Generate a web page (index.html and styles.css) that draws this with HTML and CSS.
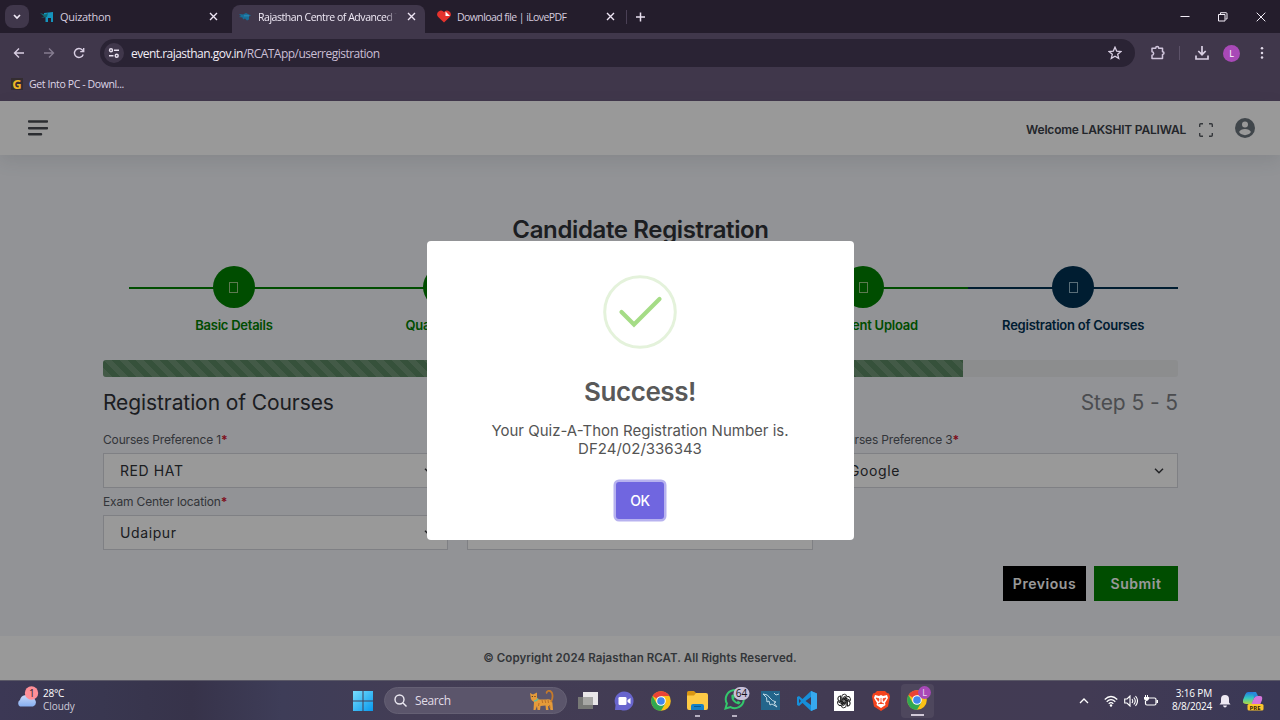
FILE: index.html
```html
<!DOCTYPE html>
<html lang="en">
<head>
<meta charset="utf-8">
<title>Rajasthan Centre of Advanced Technology</title>
<link rel="stylesheet" href="styles.css">
</head>
<body>
<div class="screen">
  <header class="browser">
    <div class="tabstrip">
      <span class="tab-search"><svg width="24" height="23" viewBox="0 0 24 23"><path d="M9 10l3 3 3-3" fill="none" stroke="#f0eaf6" stroke-width="1.7"/></svg></span>
      <div class="tab first">
        <svg class="fav" width="14" height="14" viewBox="0 0 14 14"><path d="M4 3L13 2v10h-2V8H8v4H5.500V7L4 6z" fill="#1594bd"/><path d="M0 3l5 1.500L8 3 7 7 1 8l3-1.500z" fill="#126b74"/></svg>
        <span class="tab-title">Quizathon</span>
        <svg class="x" width="9" height="9" viewBox="0 0 9 9"><path d="M1 1l7 7M8 1L1 8"/></svg>
      </div>
      <div class="tab active">
        <svg class="fav" width="14" height="14" viewBox="0 0 14 14"><path d="M1 4l4 .5L8 3l5 2.500-2 1v3l-2 1-2-2-2 1-.5-2L1 7l2-1z" fill="#166e98"/><path d="M6 5h5v1.500H6z" fill="#2a81ad"/></svg>
        <span class="tab-title fade">Rajasthan Centre of Advanced T</span>
        <svg class="x" width="9" height="9" viewBox="0 0 9 9"><path d="M1 1l7 7M8 1L1 8"/></svg>
      </div>
      <div class="tab third">
        <svg class="fav" width="14" height="14" viewBox="0 0 14 14"><path d="M7 12.500L1.200 7A3.800 3.800 0 0 1 7 2a3.800 3.800 0 0 1 5.800 5z" fill="#e5322d"/><path d="M8.500 1.500L13 6H8.500z" fill="#fff"/></svg>
        <span class="tab-title">Download file | iLovePDF</span>
        <svg class="x" width="9" height="9" viewBox="0 0 9 9"><path d="M1 1l7 7M8 1L1 8"/></svg>
      </div>
      <svg class="plus" width="9" height="10" viewBox="0 0 9 10"><path d="M4.500 .5v9M0 5h9" stroke="#e8e0ef" stroke-width="1.500"/></svg>
      <div class="window-controls">
        <svg width="10" height="10" viewBox="0 0 10 10"><path d="M.5 4.500h9"/></svg>
        <svg width="10" height="10" viewBox="0 0 10 10"><path d="M.5 2.500h6.500v6.500H.5zM2.500 2.500V.7h5.500q1 0 1 1v5.300H7.500"/></svg>
        <svg width="10" height="10" viewBox="0 0 10 10"><path d="M.7 .7l8.600 8.600M9.300 .7L.7 9.300"/></svg>
      </div>
    </div>
    <div class="toolbar">
      <div class="nav">
        <svg width="12" height="12" viewBox="0 0 12 12"><path d="M11 6H1.500M6 1.500L1.500 6 6 10.500"/></svg>
        <svg class="dim" width="12" height="12" viewBox="0 0 12 12"><path d="M1 6h9.500M6 1.500L10.500 6 6 10.500"/></svg>
        <svg width="12" height="12" viewBox="0 0 12 12"><path d="M10.200 7.500A4.500 4.500 0 1 1 9.300 3L10.500 4.300M10.700 1v3.600H7.200"/></svg>
      </div>
      <div class="omnibox">
        <span class="site"><svg width="12" height="12" viewBox="0 0 12 12"><g fill="none" stroke="#e8e0ef" stroke-width="1.400"><circle cx="3" cy="3.200" r="1.500"/><path d="M6 3.200h5M1 8.800h4.500"/><circle cx="8.700" cy="8.800" r="1.500"/></g></svg></span>
        <span class="url">event.rajasthan.gov.in<span>/RCATApp/userregistration</span></span>
        <svg class="star" width="14" height="14" viewBox="0 0 14 14"><path d="M7 1.200l1.700 3.900 4.200.4-3.200 2.800 1 4.100L7 10.200l-3.700 2.200 1-4.100L1.100 5.500l4.200-.4z" fill="none" stroke="#d9cfe3" stroke-width="1.300"/></svg>
      </div>
      <div class="tools">
        <svg width="16" height="16" viewBox="0 0 16 16"><path d="M2 3.200h3.700c0-2.200 3-2.200 3 0h3.800v3.500c2 0 2 2.800 0 2.800v4H2v-3.200c2.200-.2 2.200-3.300 0-3.500z" fill="none" stroke="#d0c5dc" stroke-width="1.500" stroke-linejoin="round"/></svg>
        <i></i>
        <svg width="14" height="14" viewBox="0 0 14 14"><path d="M7 0v8.500M3.300 5L7 8.700 10.700 5M1 9.500V13h12V9.500" fill="none" stroke="#d9cfe3" stroke-width="1.700"/></svg>
        <b>L</b>
        <svg width="4" height="14" viewBox="0 0 4 14"><g fill="#e0d8e8"><circle cx="2" cy="2.300" r="1.250"/><circle cx="2" cy="7" r="1.250"/><circle cx="2" cy="11.600" r="1.250"/></g></svg>
      </div>
    </div>
    <div class="bookmarks"><span class="g">G</span><span class="bm">Get Into PC - Downl...</span></div>
  </header>

  <main class="page">
    <div class="topbar">
      <svg class="menu" width="20" height="16" viewBox="0 0 20 16"><path d="M1 1.400h18M1 8.200h18M1 14.200h12" stroke="#484c52" stroke-width="2.500" stroke-linecap="round"/></svg>
      <span class="welcome">Welcome LAKSHIT PALIWAL</span>
      <svg class="full" width="14" height="14" viewBox="0 0 14 14"><path d="M.7 4V1.700q0-1 1-1H4M10 .7h2.300q1 0 1 1V4M13.300 10v2.300q0 1-1 1H10M4 13.300H1.700q-1 0-1-1V10" fill="none" stroke="#585c63" stroke-width="1.400"/></svg>
      <svg class="user" width="20" height="20" viewBox="0 0 20 20"><circle cx="10" cy="10" r="10" fill="#6c757d"/><circle cx="10" cy="6.500" r="3" fill="#fff"/><path d="M4 14q1.700-3 6-3t6 3a7.300 7.300 0 0 1-12 0z" fill="#fff"/></svg>
    </div>
    <section class="content">
      <h1>Candidate Registration</h1>
      <ol class="steps">
        <li><span class="dot"><i></i></span><em>Basic Details</em></li>
        <li><span class="dot"><i></i></span><em>Qualification</em></li>
        <li><span class="dot"><i></i></span></li>
        <li><span class="dot"><i></i></span><em>Document Upload</em></li>
        <li class="now"><span class="dot"><i></i></span><em>Registration of Courses</em></li>
      </ol>
      <div class="form">
        <div class="progress"><div class="bar" style="width:80%"></div></div>
        <div class="heading"><h2>Registration of Courses</h2><span>Step 5 - 5</span></div>
        <div class="fields">
          <div class="field"><label>Courses Preference 1<b>*</b></label><div class="select">RED HAT<svg width="10" height="6" viewBox="0 0 10 6"><path d="M1 .8l4 4 4-4"/></svg></div></div>
          <div class="field"><label></label><div class="select"></div></div>
          <div class="field"><label>Courses Preference 3<b>*</b></label><div class="select">Google<svg width="10" height="6" viewBox="0 0 10 6"><path d="M1 .8l4 4 4-4"/></svg></div></div>
          <div class="field"><label>Exam Center location<b>*</b></label><div class="select">Udaipur<svg width="10" height="6" viewBox="0 0 10 6"><path d="M1 .8l4 4 4-4"/></svg></div></div>
          <div class="field"><label></label><div class="select"></div></div>
        </div>
        <div class="actions"><button class="prev">Previous</button><button class="submit">Submit</button></div>
      </div>
    </section>
    <footer class="foot">© Copyright 2024 Rajasthan RCAT. All Rights Reserved.</footer>
    <div class="overlay">
      <div class="modal">
        <svg class="tick" width="74" height="74" viewBox="0 0 74 74"><circle cx="37" cy="37" r="35.300" fill="none" stroke="#e4f2db" stroke-width="3"/><path d="M18.500 37L31 49.500 56.500 24" fill="none" stroke="#a5dc86" stroke-width="4.200" stroke-linecap="round"/></svg>
        <h3>Success!</h3>
        <p>Your Quiz-A-Thon Registration Number is.<br><span>DF24/02/336343</span></p>
        <button class="ok">OK</button>
      </div>
    </div>
  </main>

  <footer class="taskbar">
    <div class="weather">
      <svg width="24" height="24" viewBox="0 0 24 24"><defs><linearGradient id="cl" x2="0" y2="1"><stop stop-color="#c8d9fa"/><stop offset="1" stop-color="#86aef0"/></linearGradient></defs><path d="M5 20.500a3.800 3.800 0 0 1 0-6.500 6 6 0 0 1 11-2 4.400 4.400 0 0 1 2 8.500z" fill="url(#cl)"/><circle cx="16.500" cy="7" r="6.700" fill="#ff8f98"/><text x="13.900" y="10.700" font-size="10" font-family="Open Sans, sans-serif" fill="#2d1c2b">1</text></svg>
      <div><span class="temp">28°C</span><span class="cond">Cloudy</span></div>
    </div>
    <div class="apps">
      <svg class="win" width="20" height="20" viewBox="0 0 20 20"><defs><linearGradient id="wi" x2="1" y2="1"><stop stop-color="#78ddfd"/><stop offset="1" stop-color="#0799ed"/></linearGradient></defs><path d="M0 0h9.500v9.500H0zM10.500 0H20v9.500h-9.500zM0 10.500h9.500V20H0zM10.500 10.500H20V20h-9.500z" fill="url(#wi)"/></svg>
      <div class="search">
        <svg width="13" height="13" viewBox="0 0 13 13"><circle cx="5.500" cy="5.500" r="4.500" fill="none" stroke="#ece9f2" stroke-width="1.400"/><path d="M9 9l3.500 3.500" stroke="#ece9f2" stroke-width="1.400"/></svg>
        <span>Search</span>
        <svg class="cat" width="24" height="21" viewBox="0 0 24 21"><path d="M0 3l3 1.500L7 2.500V7q0 2.500 3 2.500h6q6-1 6.500 4l.5 6.500h-2.500l-1-4.500-1.500 1 .5 3.500H16l-.5-4.500-5 .5-.5 4H7.500L7 16l-1.500 4H3.500L4 12 2 10.500Q.5 9 .5 6z" fill="#e59b3a"/><path d="M21 12q2.500-5 1-9-1.500-3-4-2-2 1-1 2.500" fill="none" stroke="#c57a2b" stroke-width="1.800"/><path d="M4 11q3 0 4-2.500" stroke="#64bd9b" stroke-width="1.400" fill="none"/><path d="M12 10l.7 3M15 10l.7 3M18 10l.5 3M9 13l-.5 3M19.500 15l.5 3" stroke="#bd742a" stroke-width="1.100"/><circle cx="2.300" cy="6.500" r=".6" fill="#332010"/><circle cx="5" cy="6.500" r=".6" fill="#332010"/></svg>
      </div>
      <div class="pinned">
        <span><svg width="20" height="20" viewBox="0 0 20 20"><path d="M5 1h15v13H5z" fill="#e9e7e9"/><path d="M0 6h15v12H0z" fill="#777876"/><path d="M5 6h10v8H5z" fill="#a7a7a5"/></svg></span>
        <span><svg width="20" height="20" viewBox="0 0 20 20"><path d="M10 .5a9.500 9.500 0 1 1-3 18.500H1l.5-5A9.500 9.500 0 0 1 10 .5z" fill="#6865cd"/><rect x="4.500" y="6" width="8" height="8" rx="1.300" fill="#fff"/><path d="M13.500 9l3-2v6l-3-2z" fill="#fff"/></svg></span>
        <span><svg width="20" height="20" viewBox="0 0 20 20"><g id="chrome"><circle cx="10" cy="10" r="9.800" fill="#fbc116"/><path d="M10 10L1.500 5.100A9.800 9.800 0 0 1 18.500 5.100H10z" fill="#ea4335"/><path d="M10 10L5.600 12.500 1.500 5.100A9.800 9.800 0 0 0 10 19.800L14.300 12.500z" fill="#31a851"/><circle cx="10" cy="10" r="4.800" fill="#fff"/><circle cx="10" cy="10" r="3.800" fill="#4087ed"/></g></svg></span>
        <span class="run"><svg width="21" height="19" viewBox="0 0 21 19"><path d="M0 1.500Q0 0 1.500 0H7l2 2v3H0z" fill="#d99612"/><path d="M0 4.500H7L9 2h10q2 0 2 2v13q0 2-2 2H2q-2 0-2-2z" fill="#fdca45"/><path d="M4 19v-4q0-2 2-2h9q2 0 2 2v4z" fill="#1681c9"/><path d="M7 15.500h7" stroke="#075c9a"/></svg></span>
        <span class="run whats"><svg width="26" height="24" viewBox="0 0 26 24"><path d="M1.500 21.500l1.400-5a9 9 0 1 1 3.700 3.600z" fill="none" stroke="#34c76c" stroke-width="2"/><path d="M7.300 8.500q-.5 7 7.500 9l2-2-2.800-1.800-1.300 1.300-3-3L11 10.300 9.300 7z" fill="#34c76c"/><rect x="9.500" y="0" width="16" height="13" rx="6.500" fill="#c8c0d9"/><text x="11.800" y="10" font-size="10" font-family="Open Sans, sans-serif" fill="#151119">64</text></svg></span>
        <span><svg width="19" height="19" viewBox="0 0 19 19"><path d="M0 0h19v19H0z" fill="#23658b"/><path d="M2 3q5 0 7 4 2 3 6 4l-2 1 3 4-5-3-2 1-1-4-2 1q1-5-4-8zM13 2l2 2 3-1" fill="none" stroke="#c0d8e4"/></svg></span>
        <span><svg width="20" height="20" viewBox="0 0 20 20"><path d="M14 0l6 2.500v15L14 20 5.500 12 2 15 0 14V6l2-1 3.500 3zM14 6L8.500 10l5.500 4zM2 7.700v4.600L4 10z" fill="#168fd9" fill-rule="evenodd"/><path d="M14 0l6 2.500v15L14 20z" fill="#37a9ee"/></svg></span>
        <span><svg width="20" height="20" viewBox="0 0 20 20"><path d="M0 0h20v20H0z" fill="#fff"/><g fill="none" stroke="#171717" stroke-width=".9"><path id="pt" d="M7.700 11.300V6q0-2.800 2.600-2.800 1.500 0 2.400 1.200L8.800 6.700v4"/><use href="#pt" transform="rotate(60 10 10)"/><use href="#pt" transform="rotate(120 10 10)"/><use href="#pt" transform="rotate(180 10 10)"/><use href="#pt" transform="rotate(240 10 10)"/><use href="#pt" transform="rotate(300 10 10)"/></g></svg></span>
        <span><svg width="18" height="20" viewBox="0 0 18 20"><path d="M5 0h8l2 2 2 .5 1 3-2 10-7 4.500-7-4.500L0 5.500l1-3L3 2z" fill="#f4431d"/><path d="M3 4l4 1 2-1 2 1 4-1 1 3-3 5 .5 2L9 17l-4.500-3 .5-2-3-5z" fill="#fff"/><path d="M4 7l3 .8-.5 2.500zM14 7l-3 .8.5 2.500zM9 7v6M6 13l3-1.500 3 1.500" fill="#f4431d" stroke="#f4431d" stroke-width=".8"/></svg></span>
        <span><i class="current"><svg width="25" height="24" viewBox="0 0 25 24"><use href="#chrome" x="0" y="4"/><circle cx="17.500" cy="6.500" r="6.400" fill="#a849b7"/><text x="15.300" y="10" font-size="9" font-family="Open Sans, sans-serif" fill="#eadcf0">L</text></svg></i></span>
      </div>
    </div>
    <div class="tray">
      <svg class="chev" width="10" height="6" viewBox="0 0 10 6"><path d="M1 5l4-4 4 4" fill="none" stroke="#fff" stroke-width="1.300"/></svg>
      <svg width="14" height="12" viewBox="0 0 14 12"><path d="M.7 4.500q6.300-6 12.600 0M2.700 6.700q4.300-4 8.600 0M4.700 8.800q2.300-2.200 4.600 0" fill="none" stroke="#fff" stroke-width="1.200"/><circle cx="7" cy="10.500" r="1.200" fill="#fff"/></svg>
      <svg width="14" height="12" viewBox="0 0 14 12"><path d="M.7 4h2.300l3-3v10l-3-3H.7zM8 4q1.500 2 0 4M9.800 2.500q3 3.500 0 7M11.500 1q4 5 0 10" fill="none" stroke="#fff" stroke-width="1.100"/></svg>
      <svg width="14" height="12" viewBox="0 0 14 12"><path d="M5 3h5.500q1.500 0 1.500 1.500v4q0 1.500-1.500 1.500H3q-1.500 0-1.500-1.500V6M13.400 5v3" fill="none" stroke="#fff" stroke-width="1.200"/><path d="M1 0v2H0v2q1 2 2.500 2T5 4V2H4V0H3v2H2V0z" fill="#fff"/></svg>
      <div class="clock"><span>3:16 PM</span><span class="date">8/8/2024</span></div>
      <svg class="bell" width="12" height="14" viewBox="0 0 12 14"><path d="M.5 10.500L2 8.500V5a4 4 0 0 1 8 0v3.500l1.500 2zM4 11.500h4q-.5 2-2 2t-2-2z" fill="#eee9f3"/></svg>
      <svg width="21" height="20" viewBox="0 0 21 20"><defs><linearGradient id="co" x2="0" y2="1"><stop stop-color="#2375df"/><stop offset=".5" stop-color="#32c8c0"/><stop offset="1" stop-color="#b3d640"/></linearGradient></defs><path d="M5 1h8l-4 12H3q-4 0-3-4L2 4Q3 1 5 1z" fill="url(#co)"/><path d="M13 5h4q3 0 2 4l-2 5H8l3-7q1-2 2-2z" fill="#d475dc"/><path d="M10 1h3l2 4q-3 0-4 2z" fill="#268dda"/><rect x="4.500" y="13" width="16" height="6.500" rx="1.500" fill="#fcc52c"/><text x="6.500" y="18.500" font-size="6" font-weight="700" font-family="Open Sans, sans-serif" fill="#302009">PRE</text></svg>
    </div>
  </footer>
</div>
</body>
</html>
```

FILE: styles.css
```css
* { box-sizing: border-box; }
body { margin: 0; font-family: Inter, sans-serif; }
svg { display: block; flex: none; }
h1, h2, h3, p, ol { margin: 0; padding: 0; }
button { border: 0; font-family: inherit; }
.screen { width: 1280px; height: 720px; display: flex; flex-direction: column; overflow: hidden; }

.browser { height: 101px; background: #40374b; font-family: "Open Sans", "Noto Sans", sans-serif; flex: none; }
.tabstrip { height: 34px; display: flex; align-items: center; background: #241d2c; padding-left: 5px; border-bottom: 1px solid #40374b; }
.tab-search { background: #40374b; border-radius: 8px; margin-right: 3px; width: 24px; }
.tab { display: flex; align-items: center; height: 28px; align-self: flex-end; padding-left: 8px; color: #d5ccdf; flex: none; }
.tab.first { width: 200px; padding-bottom: 5px; }
.tab.active { width: 193px; background: #40374b; border-radius: 8px 8px 0 0; color: #f0eaf6; padding: 0 0 5px 6px; }
.tab.third { width: 202px; padding-left: 12px; border-right: 1px solid #4a4055; height: 14px; align-self: center; }
.fav { margin-right: 6px; }
.tab-title { flex: none; width: 139px; font-size: 11px; line-height: 14px; letter-spacing: -.25px; white-space: nowrap; }
.first .fav { margin-left: 0; margin-right: 6px; }
.first .tab-title { width: 149px; letter-spacing: -.3px; }
.third .tab-title { width: 149px; letter-spacing: -.81px; letter-spacing: -.8px; letter-spacing: -.77px; }
.third .tab-title { font-size: 10.5px; letter-spacing: -.55px; letter-spacing: -.6px; }
.tab.third .tab-title { font-size: 11px; letter-spacing: -.82px; }
.tab.third .tab-title { font-size: 10.5px; letter-spacing: -.58px; }
.tab-title.fade { font-size: 10.5px; letter-spacing: -.45px; mask-image: linear-gradient(90deg, #000 92%, transparent); margin-right: 10px; }
.x path { stroke: #eee5f4; stroke-width: 1.4; }
.plus { margin-left: 9px; }
.window-controls { margin-left: auto; display: flex; gap: 28px; padding-right: 14px; }
.window-controls path { fill: none; stroke: #f2edf7; }
.toolbar { height: 38px; display: flex; align-items: center; }
.nav { width: 100px; padding-left: 13px; display: flex; gap: 18px; }
.nav path { fill: none; stroke: #d9cfe3; stroke-width: 1.4; }
.nav .dim { opacity: .45; }
.omnibox { width: 1035px; height: 28px; border-radius: 14px; background: #2a2334; display: flex; align-items: center; padding: 0 13px 0 4px; }
.site { width: 20px; height: 20px; border-radius: 50%; background: #40374b; display: grid; place-items: center; margin-right: 7px; }
.url { color: #f2edf6; font-size: 12px; letter-spacing: -.52px; white-space: nowrap; }
.url span { color: #cabfd5; }
.star { margin-left: auto; }
.tools { display: flex; align-items: center; padding-left: 15px; }
.tools i { width: 1px; height: 14px; background: #5c5268; margin: 0 15px 0 13px; }
.tools b { width: 17px; height: 17px; border-radius: 50%; background: #a849b7; color: #fff; font-size: 9px; font-weight: 400; display: grid; place-items: center; margin: 0 20px 0 14px; }
.bookmarks { height: 24px; padding-left: 11px; display: flex; align-items: center; gap: 6px; color: #ded5e7; }
.g { width: 12px; height: 12px; background: #342d31; color: #efb925; font: 700 13px/12px "Open Sans", sans-serif; display: grid; place-items: center; }
.bm { font-size: 10.5px; letter-spacing: -.38px; line-height: 14px; margin-top: -1px; }

.page { position: relative; height: 579px; background: #f3f5fa; display: flex; flex-direction: column; flex: none; }
.topbar { height: 54px; flex: none; background: #fff; display: flex; align-items: center; padding: 0 25px 0 28px; box-shadow: 0 6px 18px rgba(50,55,70,.1); }
.welcome { margin-left: auto; font-size: 12px; letter-spacing: -.2px; font-weight: 600; color: #3b4048; padding-top: 3px; white-space: nowrap; }
.full { margin: 4px 22px 0 13px; }
.content { height: 481px; flex: none; padding: 60px 102px 0 103px; }
h1 { text-align: center; font-size: 24px; line-height: 30px; font-weight: 600; letter-spacing: -.36px; color: #303238; }
.steps { display: grid; grid-template-columns: repeat(5, 1fr); list-style: none; margin: 21px 0 0 26px; height: 94px; }
.steps li { display: flex; flex-direction: column; align-items: center; color: #008000; background: linear-gradient(currentColor, currentColor) 0 21px / 100% 2px no-repeat; }
.steps .now { color: #003153; }
.dot { width: 42px; height: 42px; border-radius: 50%; background: currentColor; display: grid; place-items: center; }
.dot i { width: 9px; height: 11px; border: 1px solid #9cca87; }
.now .dot i { border-color: #94b7c8; }
.steps em { font-style: normal; font-size: 13px; line-height: 18px; font-weight: 600; letter-spacing: -.25px; margin-top: 8px; white-space: nowrap; }
.progress { height: 17px; border-radius: 3px; background: #e9ebed; overflow: hidden; }
.bar { height: 100%; background: #5b8763 linear-gradient(45deg, rgba(255,255,255,.13) 25%, transparent 25%, transparent 50%, rgba(255,255,255,.13) 50%, rgba(255,255,255,.13) 75%, transparent 75%) 0 0 / 16px 16px; }
.heading { display: flex; justify-content: space-between; align-items: center; height: 50px; font-size: 21px; color: #7e8085; letter-spacing: -.09px; }
h2 { font: inherit; color: #303238; }
.fields { display: grid; grid-template-columns: 345px 346px 346px; column-gap: 19px; row-gap: 3px; }
.field label { display: block; height: 22px; margin-top: 4px; font-size: 12px; line-height: 18px; letter-spacing: -.16px; color: #555961; }
.fields .field:nth-child(n+4) label { margin-top: 2px; }
.field label b { color: #d31632; }
.select { height: 35px; background: #fff; border: 1px solid #d4d6dc; display: flex; align-items: center; justify-content: space-between; padding: 0 13px 0 16px; font-size: 14px; letter-spacing: .6px; color: #303238; }
.select path { fill: none; stroke: #383a3e; stroke-width: 1.5; }
.actions { display: flex; justify-content: flex-end; gap: 8px; margin-top: 16px; }
.actions button { height: 35px; width: 83px; padding: 0; color: #fff; font-size: 14px; font-weight: 600; letter-spacing: .55px; background: #000; }
.actions .submit { background: #008000; width: 84px; }
.foot { flex: 1; background: #fff; color: #555a61; font-size: 11.5px; letter-spacing: .08px; font-weight: 600; display: flex; align-items: center; justify-content: center; }
.overlay { position: absolute; inset: 0; background: rgba(0,0,0,.4); display: flex; align-items: center; justify-content: center; }
.modal { width: 427px; height: 299px; background: #fff; border-radius: 4px; display: flex; flex-direction: column; align-items: center; padding-top: 33.5px; color: #545454; }
h3 { font-size: 26px; line-height: 32px; font-weight: 600; letter-spacing: -.45px; margin-top: 27px; color: #595959; }
.modal p { text-align: center; font-size: 15px; line-height: 18px; margin-top: 14px; }
.ok { width: 48px; height: 37px; border-radius: 3px; background: #7066e0; color: #fff; font-size: 14px; letter-spacing: -.4px; font-weight: 500; padding: 0; margin-top: 24.5px; box-shadow: 0 0 0 2.5px #b7b2ef; }

.taskbar { height: 40px; flex: none; background: linear-gradient(90deg, #3c3855, #393750 8%, #37334a 15%, #3e3d58 22%, #433d55 32%, #423b53 65%, #423b54 85%, #3a3856); border-top: 1px solid #5a5866; color: #fff; display: flex; align-items: center; font-family: "Open Sans", "Noto Sans", sans-serif; }
.weather { width: 353px; flex: none; padding-left: 16px; display: flex; gap: 4px; }
.weather span { display: block; font-size: 10px; line-height: 13px; letter-spacing: -.2px; }
.weather svg { margin: -2px 0 0 -1px; }
.weather .cond { color: #cfcbd9; letter-spacing: -.05px; }
.weather div { margin-top: -1px; }
.apps { width: 583px; flex: none; display: flex; align-items: center; }
.search { width: 183px; height: 27px; flex: none; border-radius: 14px; margin: 0 2.500px 0 11px; background: #5b556b; border: 1px solid #656074; display: flex; align-items: center; padding: 0 12px 0 9px; gap: 8px; font-size: 12px; color: #e0dce6; letter-spacing: -.4px; }
.cat { margin-left: auto; }
.pinned { display: grid; grid-template-columns: repeat(10, 36.6px); }
.pinned span { height: 38px; display: grid; place-items: center; }
.pinned .run { background: linear-gradient(#b6b0c1, #b6b0c1) 50% 33px / 5px 2px no-repeat; }
.pinned .whats { padding: 0 0 4px 5px; }
.current { width: 33px; height: 34px; border-radius: 4px; background: linear-gradient(#d1c9d8, #d1c9d8) 10px 30px / 13px 2px no-repeat, #4e475d; padding: 2px 0 0 6px; font-style: normal; }
.tray { flex: 1; display: flex; align-items: center; gap: 6px; justify-content: flex-end; padding-right: 16px; }
.chev { margin-right: 9px; }
.clock { width: 44px; text-align: right; font-size: 10px; line-height: 13px; letter-spacing: -.15px; margin: -2px 1px 0 4px; display: flex; flex-direction: column; align-items: flex-end; }
.clock span { display: block; white-space: nowrap; }
.clock .date { letter-spacing: -.2px; }
.bell { margin-right: 6px; }
```
